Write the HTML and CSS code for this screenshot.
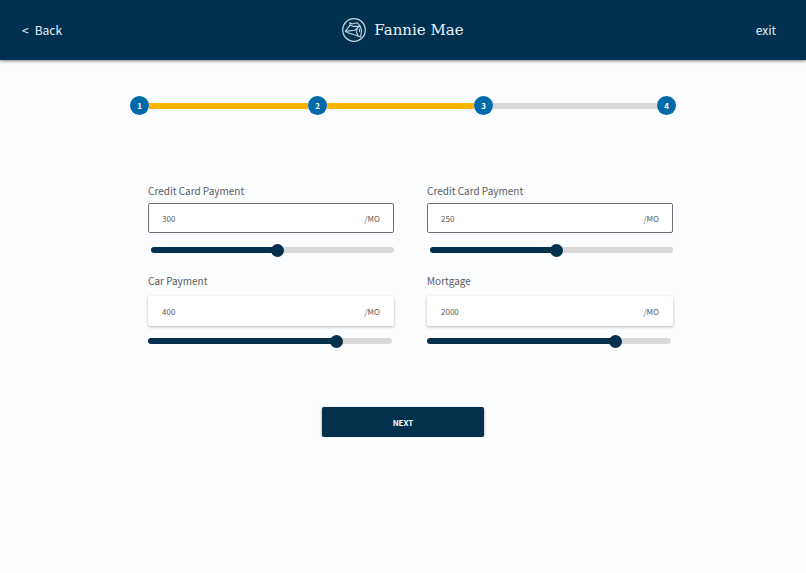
FILE: index.html
```html
<!DOCTYPE html>
<html lang="en">
<head>
  <meta charset="utf-8">
  <meta name="viewport" content="width=device-width, initial-scale=1">
  <title>Fannie Mae</title>
  <link rel="stylesheet" href="styles.css">
</head>
<body>
  <header class="topbar">
    <a class="nav-link" href="#"><span class="chevron">&lt;</span>Back</a>
    <div class="brand">
      <svg class="brand-mark" viewBox="0 0 24 24" fill="none" stroke="currentColor" stroke-linecap="round" stroke-linejoin="round" aria-hidden="true">
        <circle cx="12" cy="12" r="11.3" stroke-width="1.2"/>
        <path stroke-width="1.1" d="M3.4 13.4 8 7.2 8 4.8 10 6 15.2 4.8 18 7.6 19.6 12.4 18.6 19M3.4 13.4 12.6 12.2 17.4 8.4M3.4 13.4 5 14.4 11.6 16.6 18.6 19M8 7.2 11.6 8.4 17.4 8.4M15.2 11 14.4 14.2 16 17.4M17.6 11V13.6"/>
      </svg>
      <span class="brand-name">Fannie Mae</span>
    </div>
    <a class="nav-link nav-exit" href="#">exit</a>
  </header>

  <main class="page">
    <ol class="stepper">
      <li class="step">1</li>
      <li class="bar bar-first" role="presentation"></li>
      <li class="step">2</li>
      <li class="bar bar-second" role="presentation"></li>
      <li class="step">3</li>
      <li class="bar bar-third" role="presentation"></li>
      <li class="step">4</li>
    </ol>

    <form class="payments">
      <div class="field outlined">
        <label for="card-a">Credit Card Payment</label>
        <div class="box"><input id="card-a" type="text" value="300"><span>/MO</span></div>
        <input class="slider" type="range" min="0" max="100" value="52" style="--fill: 52%" aria-label="Credit Card Payment">
      </div>
      <div class="field outlined">
        <label for="card-b">Credit Card Payment</label>
        <div class="box"><input id="card-b" type="text" value="250"><span>/MO</span></div>
        <input class="slider" type="range" min="0" max="100" value="52" style="--fill: 52%" aria-label="Credit Card Payment">
      </div>
      <div class="field raised">
        <label for="car">Car Payment</label>
        <div class="box"><input id="car" type="text" value="400"><span>/MO</span></div>
        <input class="slider" type="range" min="0" max="100" value="79" style="--fill: 79%" aria-label="Car Payment">
      </div>
      <div class="field raised">
        <label for="mortgage">Mortgage</label>
        <div class="box"><input id="mortgage" type="text" value="2000"><span>/MO</span></div>
        <input class="slider" type="range" min="0" max="100" value="79" style="--fill: 79%" aria-label="Mortgage">
      </div>
    </form>

    <button class="next" type="button">NEXT</button>
  </main>
</body>
</html>
```

FILE: styles.css
```css
* {
  box-sizing: border-box;
}

body {
  margin: 0;
  background: #fcfdff;
  color: #5b5c5e;
  font-family: "Noto Sans CJK SC", "Noto Sans", sans-serif;
}

.topbar {
  display: grid;
  grid-template-columns: 1fr auto 1fr;
  align-items: center;
  height: 60px;
  padding: 0 30px 0 22px;
  background: #003050;
  color: #e9f1f7;
  box-shadow: 0 1px 3px rgba(0, 0, 0, 0.5);
}

.nav-link {
  color: inherit;
  font-size: 12px;
  line-height: 20px;
  text-decoration: none;
}

.chevron {
  margin-right: 6px;
}

.nav-exit {
  justify-self: end;
}

.brand {
  display: flex;
  align-items: center;
  gap: 8px;
  margin-left: 8px;
}

.brand-mark {
  width: 24px;
  height: 24px;
  color: #c9dae6;
}

.brand-name {
  font-family: "DejaVu Serif", serif;
  font-size: 15px;
  line-height: 20px;
}

.page {
  display: flex;
  flex-direction: column;
  align-items: center;
  max-width: 546px;
  margin: 0 auto;
  padding-top: 36px;
}

.stepper {
  display: flex;
  align-items: center;
  width: 100%;
  margin: 0;
  padding: 0;
  list-style: none;
}

.step {
  display: grid;
  place-items: center;
  width: 19px;
  height: 19px;
  border-radius: 50%;
  background: #0069a8;
  color: #fff;
  font-size: 8px;
  font-weight: 700;
  line-height: 19px;
}

.bar {
  height: 6px;
  background: #ffb500;
}

.bar-first {
  flex: 159;
}

.bar-second {
  flex: 147;
}

.bar-third {
  flex: 164;
  background: #d9d9d9;
}

.payments {
  display: grid;
  grid-template-columns: 1fr 1fr;
  gap: 17px 33px;
  width: 100%;
  margin-top: 68px;
  padding: 0 3px 0 18px;
}

.field {
  display: flex;
  flex-direction: column;
}

.field label {
  font-size: 10px;
  line-height: 16px;
}

.box {
  display: flex;
  align-items: center;
  height: 30px;
  padding: 0 13px;
  background: #fff;
  font-size: 8px;
}

.box input {
  flex: 1;
  min-width: 0;
  padding: 0;
  border: 0;
  outline: 0;
  background: none;
  color: inherit;
  font: inherit;
}

.outlined .box {
  margin-top: 4px;
  border: 1px solid #707174;
  border-radius: 2px;
}

.outlined .slider {
  margin: 10px 0 0 3px;
}

.raised .box {
  margin-top: 7px;
  padding: 0 14px;
  border-radius: 2px;
  box-shadow: 0 1px 3px rgba(0, 0, 0, 0.3);
}

.raised .slider {
  margin: 8px 2px 0 0;
}

.slider {
  height: 13px;
  appearance: none;
  background: none;
}

.slider::-webkit-slider-runnable-track {
  height: 6px;
  border-radius: 3px;
  background: linear-gradient(to right, #03304d var(--fill), #d9d9d9 var(--fill));
}

.slider::-webkit-slider-thumb {
  width: 13px;
  height: 13px;
  margin-top: -3px;
  appearance: none;
  border-radius: 50%;
  background: #03304d;
}

.next {
  width: 162px;
  height: 30px;
  margin-top: 60px;
  padding: 0;
  border: 0;
  border-radius: 2px;
  background: #03304d;
  box-shadow: 0 1px 3px rgba(0, 0, 0, 0.4);
  color: #fff;
  font-family: inherit;
  font-size: 8px;
  font-weight: 700;
}
```
